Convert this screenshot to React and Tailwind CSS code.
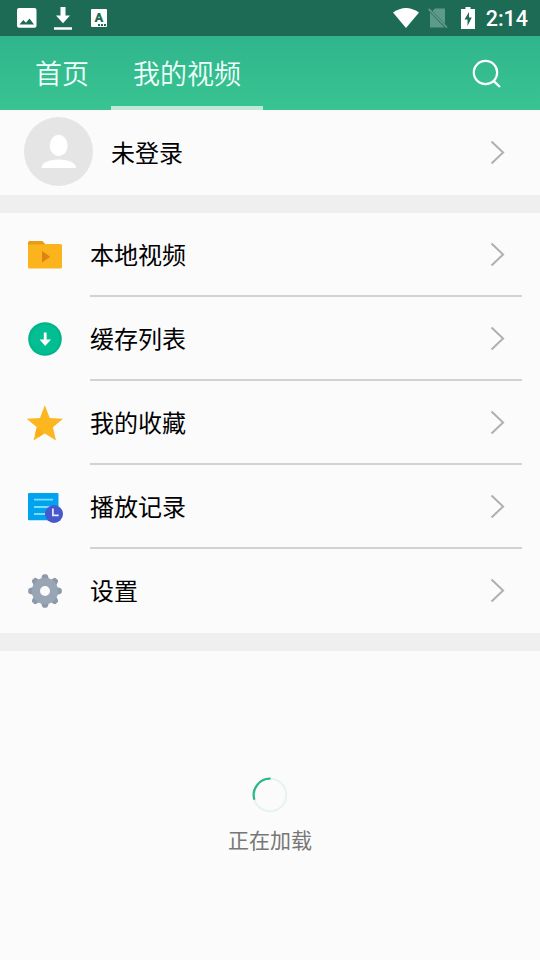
import React from 'react';

function FolderIcon() {
  return (
    <svg width="40" height="40" viewBox="0 0 40 40">
      <path d="M3 8.5Q3 7 4.5 7H16.5Q18 7 19 8.5L21 12H3Z" fill="#e89c14" />
      <path d="M3 10.5H19L21 10H35.5Q37 10 37 11.5V33Q37 34.5 35.5 34.5H4.5Q3 34.5 3 33Z" fill="#fbb41d" />
      <path d="M17 17L25.2 22.7L17 28.4Z" fill="#dd830e" />
    </svg>
  );
}

function CacheIcon() {
  return (
    <svg width="40" height="40" viewBox="0 0 40 40">
      <circle cx="20" cy="21" r="16.8" fill="#02b589" />
      <circle cx="20" cy="21" r="14.5" fill="#02be92" />
      <path d="M18.8 14.5h2.8v7H26L20.2 28L14.6 21.5H18.8Z" fill="#fff" />
    </svg>
  );
}

function StarIcon() {
  return (
    <svg width="40" height="40" viewBox="0 0 40 40">
      <path d="M19.8 3.3L24.7 15.9L38 16.7L27.9 25.3L31 38.4L19.8 31.6L8.5 38.4L11.9 25.3L1.7 16.7L15 15.9Z" fill="#fcb61f" />
      <path d="M11.9 25.3L18 30.5L14.2 35L10 32.5Z" fill="#f8ad1b" />
    </svg>
  );
}

function HistoryIcon() {
  return (
    <svg width="40" height="40" viewBox="0 0 40 40">
      <rect x="3" y="7" width="30.5" height="27.3" rx="1" fill="#02a3ee" />
      <path d="M9 13.7H28M9 21H25M9 28H22" stroke="#7bdcfb" strokeWidth="1.8" />
      <circle cx="29" cy="28" r="9" fill="#4658cc" />
      <path d="M27.9 22.5V29.3H33.7" fill="none" stroke="#e8ecff" strokeWidth="1.7" />
    </svg>
  );
}

const teeth = [0, 45, 90, 135, 180, 225, 270, 315];

function GearIcon() {
  return (
    <svg width="40" height="40" viewBox="0 0 40 40">
      {teeth.map((deg) => (
        <path key={deg} d="M16 10L17 6Q17.4 4.2 19 4.2H21Q22.6 4.2 23 6L24 10Z" fill="#8d98a9" transform={`rotate(${deg} 20 21)`} />
      ))}
      <circle cx="20" cy="21" r="9.1" fill="none" stroke="#98a5b5" strokeWidth="8.2" />
    </svg>
  );
}

function Chevron() {
  return (
    <svg className="ml-auto" width="16" height="26" viewBox="0 0 16 26">
      <path d="M1.5 2.5L13.1 13.5L1.5 24.5" fill="none" stroke="#b0b0b0" strokeWidth="2" />
    </svg>
  );
}

const items = [
  { label: '本地视频', icon: <FolderIcon /> },
  { label: '缓存列表', icon: <CacheIcon /> },
  { label: '我的收藏', icon: <StarIcon /> },
  { label: '播放记录', icon: <HistoryIcon /> },
  { label: '设置', icon: <GearIcon /> },
];

function StatusBar() {
  return (
    <div className="flex h-9 items-center bg-[#1d6b55] text-white">
      <svg className="ml-[17px]" width="20" height="20" viewBox="0 0 20 20">
        <path fillRule="evenodd" d="M2 0H17.5Q19.5 0 19.5 2V17.8Q19.5 19.8 17.5 19.8H2Q0 19.8 0 17.8V2Q0 0 2 0ZM2.5 16.5H17L12.5 10.5L9 14.7L6.3 12Z" fill="#fff" />
      </svg>
      <svg className="ml-[17px]" width="18" height="24" viewBox="0 0 18 24">
        <path d="M6.5 1H11.5V9.5H16L9 17.3L2 9.5H6.5ZM0 21.3H18V23.7H0Z" fill="#fff" />
      </svg>
      <div className="relative ml-[19px] h-[18px] w-4 rounded-[1px] bg-white text-center font-['Roboto',sans-serif] text-[13px] leading-[17px] font-black text-[#1d6b55]">
        A
        <svg className="absolute right-[1px] bottom-[1px]" width="8" height="2" viewBox="0 0 8 2">
          <path d="M0 1H8" stroke="#1d6b55" strokeWidth="2" strokeDasharray="2 1" />
        </svg>
      </div>
      <svg className="ml-auto" width="27" height="22" viewBox="0 0 27 22">
        <path d="M0 5.5Q13 -3.5 26 5.5L13 21Z" fill="#fff" />
      </svg>
      <svg className="ml-2" width="20" height="22" viewBox="0 0 20 22">
        <path d="M7 1.5H17V17L4.5 4ZM2 5.5L16.5 20.5H2Z" fill="#5e9a89" />
        <path d="M0.7 2L19 20.7" stroke="#5e9a89" strokeWidth="1.8" />
      </svg>
      <svg className="mb-px ml-[13px]" width="14" height="22" viewBox="0 0 14 22">
        <path fillRule="evenodd" d="M4.5 0H9.5V2H14V22H0V2H4.5ZM8 5L3.5 12.5H6.5V19L10.8 10.5H8Z" fill="#fff" />
      </svg>
      <span className="mr-3 ml-[11px] pt-0.5 font-['Roboto',sans-serif] text-[21.5px] leading-none font-medium">2:14</span>
    </div>
  );
}

function Header() {
  return (
    <div className="flex h-[74px] bg-linear-to-b from-[#2fb58c] to-[#39c492] text-[27px] font-[350] text-[#f0fffa]">
      <div className="ml-[13px] flex items-center border-b-4 border-transparent px-[22px] pt-1">首页</div>
      <div className="flex items-center border-b-4 border-[#bfeadb] px-[22px] pt-1">我的视频</div>
      <svg className="mt-[22px] mr-[38px] ml-auto" width="30" height="30" viewBox="0 0 30 30">
        <circle cx="13.5" cy="14.5" r="11.7" fill="none" stroke="#fff" strokeWidth="2.2" />
        <path d="M21.5 22.8L28 29" stroke="#fff" strokeWidth="2.4" />
      </svg>
    </div>
  );
}

export default function App() {
  return (
    <div className="flex h-[960px] w-[540px] flex-col overflow-hidden bg-[#fbfbfb] font-['Noto_Sans_CJK_SC',sans-serif] text-2xl text-black">
      <StatusBar />
      <Header />

      <div className="flex h-[85px] items-center pr-[34px] pb-0.5 pl-6">
        <svg width="69" height="69" viewBox="0 0 69 69">
          <circle cx="34.5" cy="34.5" r="34.5" fill="#e5e5e5" />
          <ellipse cx="34.7" cy="28.5" rx="9" ry="10.7" fill="#fff" />
          <path d="M17.5 51Q18 43 34.7 42.5Q51.5 43 52 51Z" fill="#fff" />
        </svg>
        <span className="ml-[18px]">未登录</span>
        <Chevron />
      </div>

      <div className="h-[18px] bg-[#efefef]" />

      {items.map((item, i) => (
        <div key={item.label} className="flex h-[84px] pl-[25px]">
          {/* icon column sits outside the separator line */}
          <div className="flex h-[82px] w-[65px] items-center">{item.icon}</div>
          <div className={`mr-[18px] flex flex-1 items-center border-b-2 pr-4 ${i < items.length - 1 ? 'border-[#d2d2d2]' : 'border-transparent'}`}>
            <span>{item.label}</span>
            <Chevron />
          </div>
        </div>
      ))}

      <div className="h-[18px] bg-[#efefef]" />

      <div className="flex flex-1 flex-col items-center pt-[126px]">
        <svg width="36" height="36" viewBox="0 0 36 36">
          <circle cx="18" cy="18" r="16.3" fill="none" stroke="#e4f4ef" strokeWidth="2" />
          <path d="M18.5 1.7A16.3 16.3 0 0 0 2.4 22.7" fill="none" stroke="#27b888" strokeWidth="2.2" />
        </svg>
        <span className="mt-3 text-[21px] text-[#777]">正在加载</span>
      </div>
    </div>
  );
}
